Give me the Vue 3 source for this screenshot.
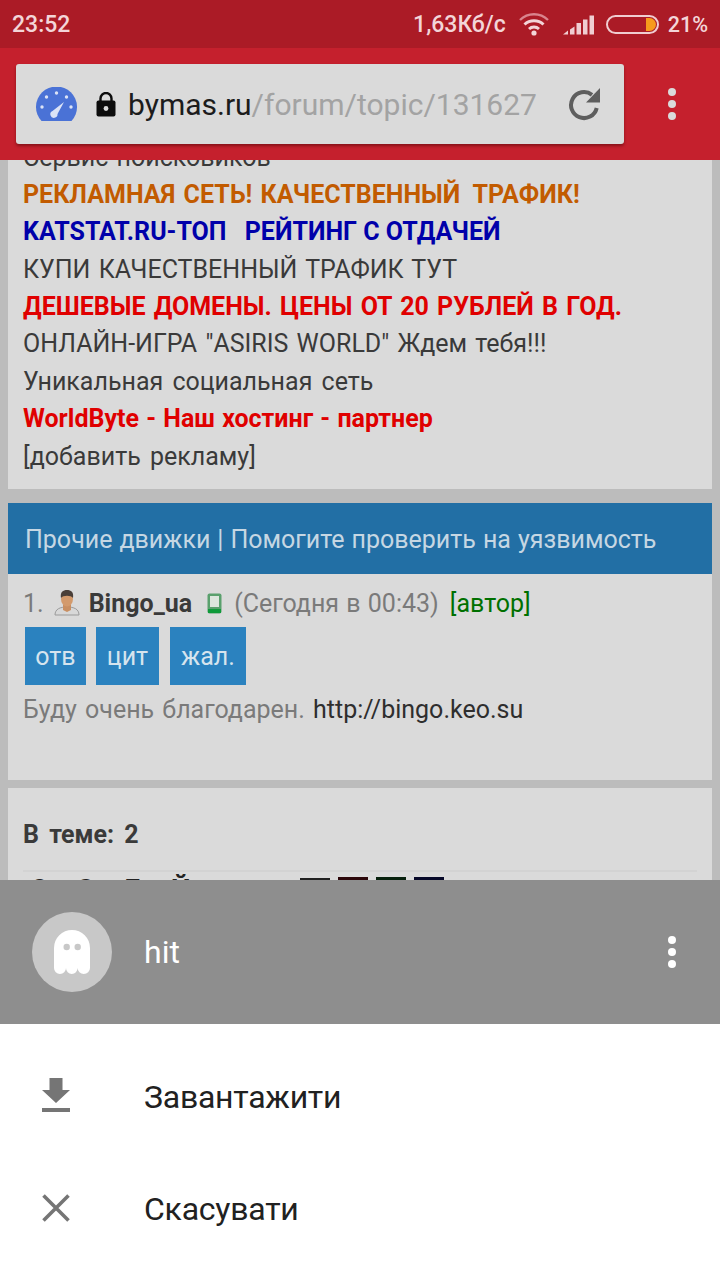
<script setup>
const ads = [
  { t: 'Сервис поисковиков', c: 'plain' },
  { t: 'РЕКЛАМНАЯ СЕТЬ! КАЧЕСТВЕННЫЙ ', tail: 'ТРАФИК!', c: 'orange' },
  { t: 'KATSTAT.RU-ТОП ', tail: 'РЕЙТИНГ С ОТДАЧЕЙ', c: 'blue' },
  { t: 'КУПИ КАЧЕСТВЕННЫЙ ТРАФИК ТУТ', c: 'plain' },
  { t: 'ДЕШЕВЫЕ ДОМЕНЫ. ЦЕНЫ ОТ 20 РУБЛЕЙ В ГОД.', c: 'red' },
  { t: 'ОНЛАЙН-ИГРА "ASIRIS WORLD" Ждем тебя!!!', c: 'plain' },
  { t: 'Уникальная социальная сеть', c: 'plain wide' },
  { t: 'WorldByte - Наш хостинг - партнер', c: 'red tight' },
  { t: '[добавить рекламу]', c: 'plain wide' },
]
</script>

<template>
  <div class="screen">
    <div class="status">
      <span class="time">23:52</span>
      <span class="spacer"></span>
      <span class="speed">1,63Кб/с</span>
      <svg class="wifi" width="32" height="24" viewBox="0 0 32 24">
        <path d="M2 8 A20 20 0 0 1 30 8" fill="none" stroke="#d9848d" stroke-width="2.400"/>
        <path d="M6.500 12.500 A14 14 0 0 1 25.500 12.500" fill="none" stroke="#f3d5d8" stroke-width="3"/>
        <path d="M11 17 A7.500 7.500 0 0 1 21 17" fill="none" stroke="#f3d5d8" stroke-width="3"/>
        <circle cx="16" cy="21" r="2.600" fill="#f3d5d8"/>
      </svg>
      <svg class="signal" width="31" height="20" viewBox="0 0 31 20">
        <path d="M0 19.500h5v-4L0 19.500z" fill="#f0cdd1"/>
        <path d="M7 19.500h4.500v-8L7 14.500z" fill="#f0cdd1"/>
        <rect x="13.500" y="8" width="4.500" height="11.500" fill="#f0cdd1"/>
        <rect x="20" y="4.500" width="4.500" height="15" fill="#f0cdd1"/>
        <rect x="26.500" y="0.500" width="4.500" height="19" fill="#f0cdd1"/>
      </svg>
      <div class="battery"><div class="charge"></div></div>
      <span class="pct">21%</span>
    </div>
    <div class="toolbar">
      <div class="omni">
        <svg class="gauge" width="41" height="34" viewBox="0 0 41 34">
          <path d="M5.500 34 A20.500 20.500 0 1 1 35.500 34 Z" fill="#4a72d6"/>
          <g fill="#dbe3f6">
            <circle cx="20.500" cy="6" r="1.700"/><circle cx="10.500" cy="10" r="1.700"/>
            <circle cx="30.500" cy="10" r="1.700"/><circle cx="6" cy="20" r="1.700"/>
            <circle cx="35" cy="20" r="1.700"/>
          </g>
          <path d="M16.500 24 L28 15 L21.500 27 A3.600 3.600 0 1 1 16.500 24 Z" fill="#dbe3f6"/>
        </svg>
        <svg class="lock" width="20" height="25" viewBox="0 0 20 25">
          <path d="M4.500 9V6.500a5.500 5.500 0 0 1 11 0V9" fill="none" stroke="#0c0c0c" stroke-width="2.400"/>
          <rect x="0.500" y="8.500" width="19" height="16" rx="2" fill="#0c0c0c"/>
          <circle cx="10" cy="16.500" r="2.400" fill="#dadada"/>
        </svg>
        <span class="url"><span class="host">bymas.ru</span><span class="path">/forum/topic/131627</span></span>
        <svg class="reload" width="34" height="34" viewBox="0 0 34 34">
          <path d="M25 7.800 A13 13 0 1 0 29.700 21" fill="none" stroke="#5e5e5e" stroke-width="4"/>
          <path d="M33 1 V15.500 H19 Z" fill="#5e5e5e"/>
        </svg>
      </div>
      <div class="dots"><i></i><i></i><i></i></div>
    </div>

    <div class="page">
      <div class="panel ads">
        <div v-for="a in ads" :key="a.t" class="ad" :class="a.c">{{ a.t }}<span v-if="a.tail" class="tail">{{ a.tail }}</span></div>
      </div>
      <div class="topic-head">Прочие движки | Помогите проверить на уязвимость</div>
      <div class="panel post">
        <div class="meta">
          <span class="num">1.</span>
          <svg class="avatar" width="26" height="27" viewBox="0 0 26 27">
            <path d="M1 26c0-6 5-8 12-8s12 2 12 8z" fill="#d8d8d8" stroke="#9a9a9a"/>
            <path d="M9 16h8v5l-4 2-4-2z" fill="#c98f62"/>
            <ellipse cx="13" cy="10" rx="6" ry="7.500" fill="#d39a6c"/>
            <path d="M7 9C6 3 9 1 13 1s7 2 6 8c-2-3-10-3-12 0z" fill="#4a3f38"/>
          </svg>
          <b class="nick">Bingo_ua</b>
          <svg class="phone" width="15" height="21" viewBox="0 0 15 21">
            <rect x="0.500" y="0.500" width="14" height="20" rx="2" fill="#5aa06d"/>
            <rect x="3" y="3" width="9" height="11" fill="#dce6dd"/>
            <rect x="1" y="16" width="13" height="4" fill="#0f9a3a"/>
          </svg>
          <span class="when">(Сегодня в 00:43)</span>
          <span class="author">[автор]</span>
        </div>
        <div class="btns">
          <span class="btn b1">отв</span><span class="btn b2">цит</span><span class="btn b3">жал.</span>
        </div>
        <div class="body">Буду очень благодарен. <span class="link">http://bingo.keo.su</span></div>
      </div>
      <div class="panel stats">
        <b class="count">В теме: 2</b>
        <div class="rule"></div>
        <div class="cut">
          <span class="cut-text">С Э Б Й</span>
          <span class="sw s0"></span><span class="sw s1"></span><span class="sw s2"></span><span class="sw s3"></span>
        </div>
      </div>
    </div>

    <div class="sheet">
      <div class="sheet-head">
        <div class="ghost-wrap">
          <svg class="ghost" width="36" height="44" viewBox="0 0 36 44">
            <path d="M0 18A18 18 0 0 1 36 18V38A6.200 6 0 0 1 23.600 38A5.800 6 0 0 1 12 38A6 6 0 0 1 0 38Z" fill="#fff"/>
            <circle cx="12.700" cy="17" r="3.200" fill="#c8c8c8"/>
            <circle cx="23.700" cy="17" r="3.200" fill="#c8c8c8"/>
          </svg>
        </div>
        <span class="file">hit</span>
        <div class="dots light"><i></i><i></i><i></i></div>
      </div>
      <div class="sheet-menu">
        <div class="item">
          <span class="ico-box">
            <svg class="ico down" width="28" height="34" viewBox="0 0 28 34">
              <path d="M7.500 0h13v12H28L14 25 0 12h7.500z" fill="#757575"/>
              <rect y="30" width="28" height="4" fill="#757575"/>
            </svg>
          </span>
          <span>Завантажити</span>
        </div>
        <div class="item">
          <span class="ico-box">
            <svg class="ico close" width="28" height="28" viewBox="0 0 28 28">
              <path d="M1.500 1.500 L26.500 26.500 M26.500 1.500 L1.500 26.500" stroke="#757575" stroke-width="3.600" fill="none"/>
            </svg>
          </span>
          <span>Скасувати</span>
        </div>
      </div>
    </div>
  </div>
</template>

<style>
html, body { margin: 0; padding: 0; }
</style>

<style scoped>
.screen {
  width: 720px;
  height: 1280px;
  display: flex;
  flex-direction: column;
  overflow: hidden;
  font-family: Roboto, "Noto Sans", sans-serif;
  background: #bcbcbc;
  color: #3a3a3a;
}
.status {
  height: 48px;
  flex: none;
  background: #ab1b26;
  color: #f3d5d8;
  display: flex;
  align-items: center;
  padding: 0 12px;
  font-size: 23px;
  font-weight: 500;
  box-sizing: border-box;
}
.spacer { flex: 1; }
.speed { margin-right: 12px; }
.wifi { margin-right: 13px; margin-top: -1px; }
.signal { margin-right: 12px; margin-top: 1px; }
.battery {
  width: 53px;
  height: 19px;
  border: 2px solid #f0cdd1;
  border-radius: 10px;
  box-sizing: border-box;
  margin-right: 9px;
  position: relative;
}
.charge {
  position: absolute;
  right: 1px;
  top: 1px;
  bottom: 1px;
  width: 10px;
  background: #f79a1c;
  border-radius: 0 7px 7px 0;
}
.pct { font-size: 21.500px; }
.toolbar {
  height: 112px;
  flex: none;
  background: #c5202d;
  display: flex;
  align-items: center;
  box-sizing: border-box;
  padding: 0 0 0 16px;
  position: relative;
  z-index: 2;
}
.omni {
  width: 608px;
  height: 80px;
  flex: none;
  background: #dadada;
  border-radius: 3px;
  box-shadow: 0 2px 3px rgba(60, 0, 0, 0.45);
  display: flex;
  align-items: center;
  box-sizing: border-box;
  padding-left: 20px;
}
.gauge { flex: none; }
.lock { margin-left: 19px; flex: none; }
.url { margin-left: 12px; font-size: 30px; white-space: nowrap; width: 439px; flex: none; }
.host { color: #1c1c1c; }
.path { color: #a3a3a3; }
.reload { flex: none; }
.dots {
  display: flex;
  flex-direction: column;
  gap: 4px;
  margin-left: 44px;
}
.dots i {
  width: 8px;
  height: 8px;
  border-radius: 50%;
  background: #dadada;
  display: block;
}
.page {
  flex: 1;
  min-height: 0;
  overflow: hidden;
  padding: 0 8px;
  display: flex;
  flex-direction: column;
}
.panel { background: #dadada; flex: none; }
.ads {
  height: 329px;
  padding: 0 15px;
  box-sizing: border-box;
}
.ad {
  height: 37.400px;
  line-height: 37.400px;
  font-size: 25px;
  white-space: pre;
  word-spacing: 2px;
  position: relative;
  top: -21.500px;
}
.ad.wide { word-spacing: 3px; }
.ad.orange { color: #c25b00; font-weight: 700; }
.ad.blue { color: #0000aa; font-weight: 700; }
.ad.red { color: #e00000; font-weight: 700; }
.ad.tight { word-spacing: 1px; }
.tail { display: inline-block; }
.orange .tail { margin-left: 4px; }
.blue .tail { margin-left: 10px; word-spacing: 0; }
.topic-head {
  margin-top: 14px;
  height: 71px;
  flex: none;
  background: #226fa5;
  color: #c6d7e3;
  font-size: 25px;
  line-height: 73px;
  padding-left: 17px;
  white-space: nowrap;
  word-spacing: 0.800px;
}
.post {
  height: 206px;
  padding: 0 15px;
  box-sizing: border-box;
}
.meta {
  display: flex;
  align-items: center;
  height: 53px;
  padding-top: 6px;
  box-sizing: border-box;
  font-size: 25px;
  color: #7a7a7a;
  white-space: nowrap;
  word-spacing: 1px;
}
.avatar { margin-left: 10px; margin-right: 9px; margin-top: -3px; flex: none; }
.nick { color: #3a3a3a; font-weight: 700; }
.phone { margin-left: 15px; margin-right: 12px; flex: none; }
.author { color: #007000; margin-left: 11px; }
.btns {
  display: flex;
  margin-left: 2px;
  height: 58px;
}
.btn {
  background: #2b82bf;
  color: #d6e4ee;
  font-size: 25px;
  display: flex;
  align-items: center;
  justify-content: center;
}
.b1 { width: 61px; }
.b2 { width: 63px; margin-left: 10px; }
.b3 { width: 76px; margin-left: 11px; }
.body {
  margin-top: 10px;
  font-size: 25px;
  color: #7a7a7a;
  word-spacing: 2px;
  white-space: nowrap;
}
.link { color: #2e2e2e; word-spacing: 0; }
.stats {
  margin-top: 8px;
  height: 200px;
  padding: 33px 15px 0;
  box-sizing: border-box;
}
.count { font-size: 25px; display: block; line-height: 28px; word-spacing: 4px; color: #3a3a3a; }
.rule { height: 2px; background: #d3d3d3; margin-top: 21px; }
.cut { display: flex; align-items: flex-start; height: 40px; position: relative; }
.cut-text {
  font-size: 28px;
  line-height: 32px;
  margin-top: 2px;
  font-weight: 700;
  color: #222;
  word-spacing: 22px;
  margin-left: 7px;
  width: 270px;
  white-space: nowrap;
  flex: none;
}
.sw { width: 30px; height: 30px; margin-top: 5px; margin-right: 8px; display: block; flex: none; }
.s0 { background: #1f1f1f; margin-top: 6px; }
.s1 { background: #2a0508; }
.s2 { background: #06200c; }
.s3 { background: #060828; }
.sheet {
  height: 400px;
  flex: none;
  display: flex;
  flex-direction: column;
  position: relative;
  z-index: 3;
}
.sheet-head {
  height: 144px;
  background: #8e8e8e;
  display: flex;
  align-items: center;
  padding-left: 32px;
  box-sizing: border-box;
  flex: none;
}
.ghost-wrap {
  width: 80px;
  height: 80px;
  border-radius: 50%;
  background: #c8c8c8;
  display: flex;
  align-items: center;
  justify-content: center;
  flex: none;
}
.ghost { margin-left: -1px; }
.file { margin-left: 32px; font-size: 32px; color: #fff; flex: 1; }
.dots.light { margin: 0 44px 0 0; }
.dots.light i { background: #fff; }
.sheet-menu { flex: 1; background: #fff; padding-top: 17px; }
.item {
  height: 112px;
  display: flex;
  align-items: center;
  color: #212121;
  font-size: 32px;
  letter-spacing: -0.250px;
}
.ico-box {
  width: 144px;
  box-sizing: border-box;
  padding-left: 42px;
  display: flex;
  flex: none;
}
.ico.down { margin-top: -4px; }
.ico.close { margin-top: -2px; }
</style>
